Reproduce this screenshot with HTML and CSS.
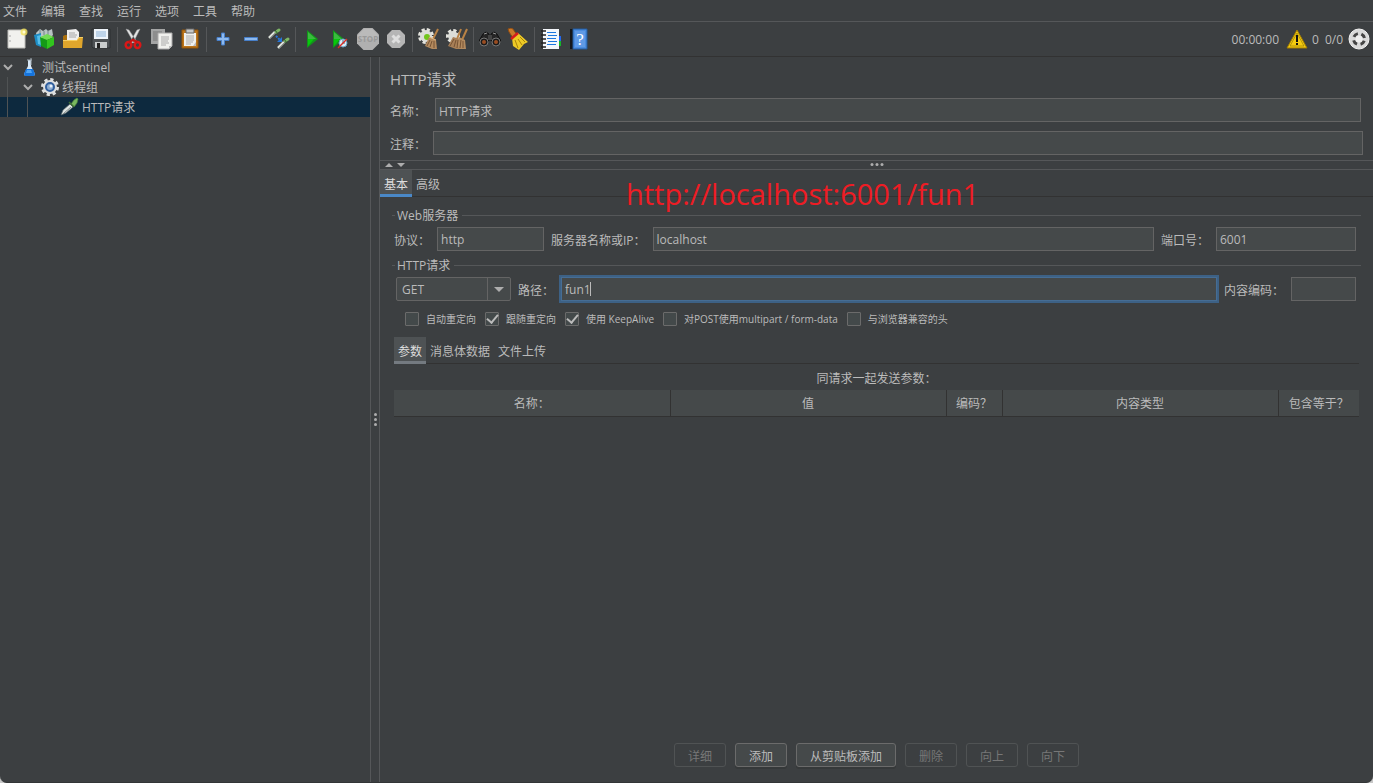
FILE: index.html
```
<!DOCTYPE html>
<html lang="zh-CN">
<head>
    <meta charset="UTF-8">
    <meta name="viewport" content="width=device-width, initial-scale=1.0">
    <title>HTTP请求</title>
    <link rel="stylesheet" href="styles.css">
</head>
<body>
<div class="app">
    <!-- Menu bar -->
    <nav class="menubar">
        <a href="#">文件</a>
        <a href="#">编辑</a>
        <a href="#">查找</a>
        <a href="#">运行</a>
        <a href="#">选项</a>
        <a href="#">工具</a>
        <a href="#">帮助</a>
    </nav>

    <!-- Toolbar -->
    <div class="toolbar">
        <button class="tool" aria-label="新建">
            <svg width="22" height="22" viewBox="0 0 22 22"><path d="M2 2h17v18H2z" fill="#f1f1ee" stroke="#bdbdb9"/><path d="M4 7v2M4 12v2" stroke="#aaa"/><circle cx="18" cy="4" r="3.500" fill="#f4e35c" opacity=".8"/><circle cx="18" cy="4" r="1.500" fill="#fffbd0"/></svg>
        </button>
        <button class="tool" aria-label="模板">
            <svg width="22" height="22" viewBox="0 0 22 22"><path d="M2 5l4-4 3 2 3-2 2 2 4-2 1 6-4 4H3z" fill="#b9c3c4"/><path d="M6 2v5M10 3v4M14 2v5" stroke="#71868a"/><path d="M0 7l7-2v14l-5-2z" fill="#1d8cc4"/><path d="M3 8l4-1v10l-3-1z" fill="#55bde8"/><path d="M6 9l7 2v10l-6-3z" fill="#159a17"/><path d="M6 9l7-3 7 3-7 3z" fill="#73dc55"/><path d="M13 12l7-3v8l-7 4z" fill="#32c51e"/></svg>
        </button>
        <button class="tool" aria-label="打开">
            <svg width="22" height="22" viewBox="0 0 22 22"><path d="M1 8l2-1h4l1 2h10v11H1z" fill="#a86e0d"/><path d="M5 2l9-1 3 3v9H5z" fill="#eee"/><path d="M7 5h6M7 7h8M7 9h7" stroke="#a6a6a6"/><path d="M1 12h14l2-3h4l-1 11H1z" fill="#e0a62c"/><path d="M1 12.500h14l2-3h4" stroke="#f7cf62" fill="none"/></svg>
        </button>
        <button class="tool" aria-label="保存">
            <svg width="22" height="22" viewBox="0 0 22 22"><path d="M2 1h18v19H3l-1-1z" fill="#4d5154" stroke="#2d3032"/><path d="M4 1h14v10H4z" fill="#eef4fa"/><path d="M6 4h10M6 6h10M6 8h10" stroke="#8db3d8"/><path d="M5 14h12v6H5z" fill="#c9cccd"/><path d="M7 15h3v5H7z" fill="#222"/></svg>
        </button>
        <span class="sep"></span>
        <button class="tool" aria-label="剪切">
            <svg width="22" height="22" viewBox="0 0 22 22"><path d="M3 1l3 1 8 12-3 1zM17 1l-3 1-7 12 3 1z" fill="#e4e5e5" stroke="#999b9c" stroke-width=".5"/><ellipse cx="5.500" cy="17" rx="2.800" ry="3" fill="none" stroke="#d91717" stroke-width="2.500"/><ellipse cx="14.500" cy="17" rx="2.800" ry="3" fill="none" stroke="#d91717" stroke-width="2.500"/><path d="M6 14l4-2 4 2" stroke="#c51313" stroke-width="2.500" fill="none"/></svg>
        </button>
        <button class="tool" aria-label="复制">
            <svg width="24" height="22" viewBox="0 0 24 22"><path d="M1 1h14v15H1z" fill="#a4a5a5"/><path d="M3 4h9M3 6h5M3 8h5M3 10h5M3 12h5" stroke="#777"/><path d="M8 5h14v13l-3 3H8z" fill="#f0f0ed" stroke="#aaa"/><path d="M11 9h8M11 11h8M11 13h7M11 15h8M11 17h5" stroke="#aaa"/><path d="M19 21v-3h3z" fill="#bbb"/></svg>
        </button>
        <button class="tool" aria-label="粘贴">
            <svg width="22" height="22" viewBox="0 0 22 22"><path d="M3 2h16v18H3z" fill="#bd761b" stroke="#935508"/><path d="M5 5h12v13H5z" fill="#f0f0ed"/><path d="M7 1h8v4H7z" fill="#c6c8c8" stroke="#666"/><path d="M7 8h8M7 10h8M7 12h8M7 14h7M7 16h5" stroke="#aaa"/><path d="M14 18l3-4v4z" fill="#bbb"/></svg>
        </button>
        <span class="sep"></span>
        <button class="tool" aria-label="全部展开">
            <svg width="22" height="22" viewBox="0 0 22 22"><path d="M9.500 5h3v4.500H17v3h-4.500V17h-3v-4.500H5v-3h4.500z" fill="#8db9ee" stroke="#477fc9"/></svg>
        </button>
        <button class="tool" aria-label="全部折叠">
            <svg width="22" height="22" viewBox="0 0 22 22"><path d="M4.500 9.500h13v3h-13z" fill="#8db9ee" stroke="#477fc9"/></svg>
        </button>
        <button class="tool" aria-label="切换">
            <svg width="22" height="22" viewBox="0 0 22 22"><path d="M1 10l6-6M10 20l6-6" stroke="#dfe3dc" stroke-width="2.500"/><path d="M1 11l7-7M10 21l7-7" stroke="#6c756d" stroke-width=".7"/><path d="M8 4l3-2M17 13l3-2" stroke="#7cb565" stroke-width="3" stroke-linecap="round"/><path d="M7 2l3 4M16 11l3 4" stroke="#2f5b2d"/><path d="M8 8l4 4" stroke="#2776db" stroke-width="2" stroke-dasharray="2 1"/><path d="M14 9v5H9z" fill="#2776db"/></svg>
        </button>
        <span class="sep"></span>
        <button class="tool" aria-label="启动">
            <svg width="22" height="22" viewBox="0 0 22 22"><path d="M6 2l11 9-11 9z" fill="#12961a"/><path d="M7 4l8 7H7z" fill="#3bbb3f"/><path d="M7 11h6l-6 7z" fill="#07c90b"/></svg>
        </button>
        <button class="tool" aria-label="不停顿开始">
            <svg width="22" height="22" viewBox="0 0 22 22"><path d="M4 2l11 9-11 9z" fill="#12961a"/><path d="M5 4l8 7H5z" fill="#3bbb3f"/><path d="M5 11h6l-6 7z" fill="#07c90b"/><circle cx="14" cy="15" r="4" fill="#d9edf8" stroke="#6aa2c6"/><path d="M14 12v3h2" stroke="#4d718c" fill="none"/><path d="M9 20l9-9" stroke="#d92c25" stroke-width="1.500"/></svg>
        </button>
        <button class="tool" aria-label="停止" disabled>
            <svg width="22" height="22" viewBox="0 0 22 22"><path d="M6.500 0h9L22 6.500v9L15.500 22h-9L0 15.500v-9z" fill="#b0b0b0"/><path d="M1 11V7l6-6h8l6 6v4z" fill="#bababa"/><text x="11" y="14" text-anchor="middle" class="stop-text">STOP</text></svg>
        </button>
        <button class="tool" aria-label="关闭" disabled>
            <svg width="22" height="22" viewBox="0 0 22 22"><path d="M7 2h8l5 5v8l-5 5H7l-5-5V7z" fill="#b5b5b5"/><path d="M7.500 7.500l7 7M14.500 7.500l-7 7" stroke="#dedede" stroke-width="3"/></svg>
        </button>
        <span class="sep"></span>
        <button class="tool" aria-label="清除">
            <svg width="22" height="22" viewBox="0 0 22 22"><circle cx="8" cy="8" r="6.500" fill="none" stroke="#e5e5df" stroke-width="3" stroke-dasharray="3.100 2"/><circle cx="8" cy="8" r="6" fill="#dcddd8"/><circle cx="9" cy="9" r="3" fill="#72c61c"/><path d="M20 1l-5 10" stroke="#b98245" stroke-width="2"/><path d="M11 9l7 3 1 9-5 0-7-3z" fill="#b38a5e"/><path d="M12 12l-3 6M14 13l-2 6M16 13v7" stroke="#775334"/><path d="M11 9l7 3" stroke="#e0b783"/></svg>
        </button>
        <button class="tool" aria-label="清除全部">
            <svg width="22" height="22" viewBox="0 0 22 22"><circle cx="7" cy="8" r="5.500" fill="none" stroke="#e5e5df" stroke-width="3" stroke-dasharray="3.100 2"/><circle cx="7" cy="8" r="5" fill="#dcddd8"/><path d="M15 1l-4 10M21 1l-5 11" stroke="#b98245" stroke-width="2"/><path d="M7 9l7 2 1 10-5 0-8-3z" fill="#a98057"/><path d="M13 9l6 3 1 9-5 0-5-2z" fill="#b38a5e"/><path d="M8 11l-4 7M10 12l-2 7M12 12l-1 8M15 12l-1 8M17 13v7" stroke="#775334"/></svg>
        </button>
        <span class="sep"></span>
        <button class="tool" aria-label="查找">
            <svg width="22" height="22" viewBox="0 0 22 22"><path d="M4 6l3-2 3 2v7H0zM18 6l-3-2-3 2v7h10z" fill="#252525" stroke="#111"/><path d="M9 7h4v5H9z" fill="#444"/><circle cx="5" cy="14" r="4" fill="#1b1b1b" stroke="#777"/><circle cx="17" cy="14" r="4" fill="#1b1b1b" stroke="#777"/><circle cx="5" cy="14" r="2" fill="#9b4d22"/><circle cx="17" cy="14" r="2" fill="#9b4d22"/><path d="M5 6l3-1M14 5l3 1" stroke="#999"/></svg>
        </button>
        <button class="tool" aria-label="重置查找">
            <svg width="22" height="22" viewBox="0 0 22 22"><path d="M1 1l3-1 2 1 4 6-4 3-4-6z" fill="#c9792a" stroke="#8d4c13"/><path d="M5 10l6-5 10 9-4 2-5 6-6-4z" fill="#edca25"/><path d="M8 12l3 8M11 11l4 6M13 9l5 5" stroke="#a9830b"/><path d="M4 11l7-6" stroke="#d51c1c" stroke-width="2.500"/></svg>
        </button>
        <span class="sep"></span>
        <button class="tool" aria-label="函数助手">
            <svg width="22" height="22" viewBox="0 0 22 22"><path d="M3 1h16v20H3z" fill="#f4f7fb"/><path d="M7 4.500h9M8 7.500h9M7 10.500h9M8 13.500h9M7 16.500h9" stroke="#1c77df"/><path d="M1 3h5M1 7h5M1 11h5M1 15h5M1 19h5" stroke="#222" stroke-width="1.500"/><path d="M19 8h2v5h-2z" fill="#2268ee"/><path d="M19 13h2v5h-2z" fill="#15b52b"/></svg>
        </button>
        <button class="tool" aria-label="帮助">
            <svg width="22" height="22" viewBox="0 0 22 22"><path d="M2 1h4v20H2z" fill="#151719"/><path d="M5 1h14v20H5z" fill="#4a8cdf" stroke="#235b9d"/><path d="M7 3h10v16H7z" fill="#5f9ae6"/><text x="12" y="17" text-anchor="middle" class="help-text">?</text></svg>
        </button>
        <div class="status">
            <span class="timer">00:00:00</span>
            <svg width="22" height="20" viewBox="0 0 22 20"><path d="M11 1l10 18H1z" fill="#f5cb10" stroke="#a27c00" stroke-linejoin="round"/><path d="M11 4l7 13H4z" fill="none" stroke="#8a7206" stroke-width=".6"/><path d="M11 6v7M11 14v2" stroke="#111" stroke-width="2"/></svg>
            <span class="errors">0</span>
            <span class="threads">0/0</span>
            <svg width="22" height="22" viewBox="0 0 22 22"><circle cx="11" cy="11" r="10" fill="#d9d9d9" stroke="#f1f1f1"/><circle cx="11" cy="11" r="5.500" fill="none" stroke="#444" stroke-width="3" stroke-dasharray="5 3.640" stroke-dashoffset="-1.800"/><circle cx="11" cy="11" r="3.500" fill="#eee"/></svg>
        </div>
    </div>

    <div class="main">
        <!-- Test plan tree -->
        <aside class="tree">
            <div class="row">
                <svg class="arrow" width="10" height="10" viewBox="0 0 10 10"><path d="M1 3l4 4 4-4" fill="none" stroke="#adadad" stroke-width="2"/></svg>
                <svg width="20" height="20" viewBox="0 0 20 20"><path d="M8 3h3v6l4 8-1 2H5l-1-2 4-8z" fill="#d9e8f6"/><path d="M6 12h7l2 5-1 2H5l-1-2z" fill="#1674dc"/><path d="M7 13h4l1 3H6z" fill="#4ea5f5"/><path d="M7 3h5M11 1v7" stroke="#a8b3bb"/></svg>
                <span>测试sentinel</span>
            </div>
            <div class="row level-1">
                <i class="guide"></i>
                <svg class="arrow" width="10" height="10" viewBox="0 0 10 10"><path d="M1 3l4 4 4-4" fill="none" stroke="#adadad" stroke-width="2"/></svg>
                <svg width="20" height="20" viewBox="0 0 20 20"><circle cx="10" cy="10" r="7.500" fill="none" stroke="#dedfdf" stroke-width="3" stroke-dasharray="3.200 2.690"/><circle cx="10" cy="10" r="7" fill="#dedfdf"/><circle cx="10" cy="10" r="4" fill="#8fadd0" stroke="#315f9d" stroke-width="2"/><circle cx="11" cy="9" r="1.500" fill="#e8f1fb"/></svg>
                <span>线程组</span>
            </div>
            <div class="row level-2 selected">
                <i class="guide"></i>
                <i class="guide"></i>
                <svg width="20" height="20" viewBox="0 0 20 20"><path d="M1 18l2-5 7-6 3 3-7 6z" fill="#dfe5e3" stroke="#526064" stroke-width=".7"/><path d="M3 17l8-7" stroke="#7f898a"/><path d="M11 7l3-4 3-2 1 1-1 4-3 4z" fill="#79b85f" stroke="#4b8139" stroke-width=".7"/><path d="M9 5l5 5" stroke="#3e6e35" stroke-width="1.500"/></svg>
                <span>HTTP请求</span>
            </div>
        </aside>

        <div class="divider"><i></i><i></i><i></i></div>

        <!-- HTTP request editor -->
        <main class="editor">
            <h1>HTTP请求</h1>
            <div class="line name-line">
                <label for="name">名称：</label>
                <input type="text" id="name" class="grow" value="HTTP请求">
            </div>
            <div class="line comment-line">
                <label for="comment">注释：</label>
                <input type="text" id="comment" class="grow">
            </div>

            <div class="h-divider">
                <button class="collapse up" aria-label="向上折叠"></button>
                <button class="collapse down" aria-label="向下折叠"></button>
                <div class="dots"><i></i><i></i><i></i></div>
            </div>

            <div class="tabs main-tabs">
                <button class="tab active">基本</button>
                <button class="tab">高级</button>
                <span class="note">http://localhost:6001/fun1</span>
            </div>

            <div class="content">
                <fieldset class="group">
                    <legend>Web服务器</legend>
                    <div class="fields">
                        <label for="protocol">协议：</label>
                        <input type="text" id="protocol" class="protocol" value="http">
                        <label for="server">服务器名称或IP：</label>
                        <input type="text" id="server" class="grow" value="localhost">
                        <label for="port">端口号：</label>
                        <input type="text" id="port" class="port" value="6001">
                    </div>
                </fieldset>

                <fieldset class="group">
                    <legend>HTTP请求</legend>
                    <div class="fields request">
                        <div class="combo">
                            <select aria-label="方法">
                                <option>GET</option>
                            </select>
                        </div>
                        <label for="path">路径：</label>
                        <div class="path grow">
                            <input type="text" id="path" value="fun1">
                            <i class="caret"></i>
                        </div>
                        <label for="encoding">内容编码：</label>
                        <input type="text" id="encoding" class="encoding">
                    </div>
                </fieldset>

                <div class="checks">
                    <label><input type="checkbox">自动重定向</label>
                    <label><input type="checkbox" checked>跟随重定向</label>
                    <label><input type="checkbox" checked>使用 KeepAlive</label>
                    <label><input type="checkbox">对POST使用multipart / form-data</label>
                    <label><input type="checkbox">与浏览器兼容的头</label>
                </div>

                <div class="params">
                    <div class="tabs sub-tabs">
                        <button class="tab active">参数</button>
                        <button class="tab">消息体数据</button>
                        <button class="tab">文件上传</button>
                    </div>
                    <table>
                        <caption>同请求一起发送参数：</caption>
                        <thead>
                            <tr>
                                <th>名称：</th>
                                <th>值</th>
                                <th class="col-encode">编码？</th>
                                <th>内容类型</th>
                                <th class="col-equals">包含等于？</th>
                            </tr>
                        </thead>
                    </table>
                </div>
            </div>

            <div class="actions">
                <button disabled>详细</button>
                <button>添加</button>
                <button>从剪贴板添加</button>
                <button disabled>删除</button>
                <button disabled>向上</button>
                <button disabled>向下</button>
            </div>
        </main>
    </div>
</div>
</body>
</html>
```
FILE: styles.css
```
/* General Reset */
* {
    margin: 0;
    padding: 0;
    box-sizing: border-box;
}

body {
    font-family: "Open Sans", "Noto Sans CJK SC", sans-serif;
    font-size: 12px;
    line-height: 16px;
    background: #c8c8c8;
    color: #bbbbbb;
    overflow: hidden;
}

button,
input,
select {
    font: inherit;
    color: inherit;
}

.app {
    display: flex;
    flex-direction: column;
    height: 100vh;
    background: #3c3f41;
    border-bottom: 1px solid #323536;
    border-radius: 0 0 7px 7px;
}

/* Menu bar */
.menubar {
    display: flex;
    gap: 14px;
    padding: 4px 3px 1px;
    border-bottom: 1px solid #555759;
}

.menubar a {
    color: inherit;
    text-decoration: none;
}

/* Toolbar */
.toolbar {
    display: flex;
    align-items: center;
    height: 35px;
    padding: 0 3px;
    border-bottom: 1px solid #323232;
}

.tool {
    display: flex;
    align-items: center;
    justify-content: center;
    width: 28px;
    height: 28px;
    background: none;
    border: none;
}

.sep {
    width: 5px;
    height: 25px;
    background: linear-gradient(#555759, #555759) center / 1px 100% no-repeat;
}

.stop-text {
    font-size: 8px;
    font-weight: bold;
    fill: #999999;
}

.help-text {
    font-family: "Liberation Serif", serif;
    font-size: 17px;
    fill: #ffffff;
}

.status {
    display: flex;
    align-items: center;
    margin-left: auto;
}

.status span {
    padding-top: 2px;
}

.timer {
    margin-right: 7px;
}

.errors {
    margin: 0 6px 0 4px;
}

.threads {
    margin-right: 5px;
}

/* Main area */
.main {
    display: flex;
    flex: 1;
    min-height: 0;
}

.tree {
    flex: 0 0 370px;
}

.row {
    display: flex;
    align-items: center;
    height: 20px;
    padding-left: 3px;
}

.row span {
    margin-left: 2px;
    padding-top: 2px;
}

.arrow {
    margin-right: 7px;
}

.guide {
    width: 20px;
    height: 20px;
    border-left: 1px solid #505354;
}

.level-1,
.level-2 {
    padding-left: 7px;
}

.level-1 .guide {
    width: 16px;
}

.level-2 svg {
    margin-left: 13px;
}

.selected {
    background: #0d293e;
}

/* Vertical splitter */
.divider {
    display: flex;
    flex-direction: column;
    align-items: center;
    justify-content: center;
    gap: 2px;
    width: 10px;
    border: 1px solid #555759;
    border-width: 0 1px;
}

.divider i,
.dots i {
    width: 3px;
    height: 3px;
    border-radius: 50%;
    background: #adadad;
}

/* Editor */
.editor {
    display: flex;
    flex: 1;
    flex-direction: column;
    min-width: 0;
}

h1 {
    padding: 12px 10px 9px;
    font-size: 15px;
    font-weight: normal;
    line-height: 20px;
}

.line {
    display: flex;
    align-items: center;
}

.line label,
.fields label {
    padding-top: 3px;
}

.name-line {
    gap: 9px;
    padding: 0 12px 9px 10px;
}

.comment-line {
    gap: 7px;
    padding: 0 10px 5px;
}

input[type="text"] {
    height: 24px;
    min-width: 0;
    padding: 1px 3px 0;
    background: #45494a;
    border: 1px solid #646464;
    outline: none;
}

.grow {
    flex: 1;
    min-width: 0;
}

/* Horizontal splitter */
.h-divider {
    position: relative;
    display: flex;
    align-items: center;
    gap: 4px;
    height: 10px;
    padding-left: 5px;
    border: 1px solid #555759;
    border-width: 1px 0;
}

.collapse {
    border: 4px solid transparent;
    background: none;
}

.up {
    border-top: none;
    border-bottom-color: #adadad;
}

.down {
    border-bottom: none;
    border-top-color: #adadad;
}

.dots {
    position: absolute;
    top: 2px;
    left: 50%;
    display: flex;
    gap: 2px;
    transform: translateX(-50%);
}

/* Tabs */
.tabs {
    position: relative;
    display: flex;
    height: 27px;
    box-shadow: inset 0 -1px #323232;
}

.tab {
    padding: 5px 4px 0;
    background: none;
    border: none;
    border-bottom: 3px solid transparent;
}

.tab.active {
    background: #4e5254;
    color: #dddddd;
    border-bottom-color: #4a88c7;
}

.sub-tabs .tab.active {
    border-bottom-color: #747a80;
}

/* Red note on top of the form */
.note {
    position: absolute;
    top: 4px;
    left: 246px;
    color: #ee1c24;
    font-size: 29px;
    line-height: 40px;
    white-space: nowrap;
}

.content {
    flex: 1;
    padding: 9px 12px 0;
}

.group {
    min-width: 0;
    padding: 0 5px 0 2px;
    border: none;
    border-top: 1px solid #555759;
}

.group legend {
    margin-left: 1px;
    padding: 2px 4px 0 2px;
}

.fields {
    display: flex;
    align-items: center;
    gap: 7px;
    padding: 3px 0 5px;
}

.request {
    padding-left: 2px;
}

.protocol {
    width: 107px;
}

.port {
    width: 140px;
}

.encoding {
    width: 65px;
}

.combo {
    position: relative;
    width: 115px;
}

.combo select {
    display: block;
    width: 100%;
    height: 24px;
    padding: 1px 0 0 5px;
    appearance: none;
    background: linear-gradient(#646464, #646464) right 22px top / 1px 100% no-repeat #45494a;
    border: 1px solid #646464;
    border-radius: 2px;
    outline: none;
}

.combo::after {
    content: "";
    position: absolute;
    top: 10px;
    right: 7px;
    border: 5px solid transparent;
    border-top-color: #adadad;
    border-bottom: none;
    pointer-events: none;
}

.path {
    position: relative;
    display: flex;
}

.path input[type="text"] {
    width: 100%;
    border-color: #466d94;
    box-shadow: 0 0 0 2px #3d6185;
}

.caret {
    position: absolute;
    top: 5px;
    left: 29px;
    width: 1px;
    height: 14px;
    background: #bbbbbb;
}

/* Checkboxes */
.checks {
    display: flex;
    gap: 9px;
    padding: 6px 13px 11px;
    font-size: 10px;
    line-height: 14px;
}

.checks label {
    display: flex;
    align-items: center;
    gap: 7px;
}

.checks input {
    display: flex;
    align-items: center;
    justify-content: center;
    width: 14px;
    height: 14px;
    appearance: none;
    background: #43494a;
    border: 1px solid #6b6b6b;
    border-radius: 1px;
}

.checks input:checked::after {
    content: "";
    width: 5px;
    height: 9px;
    margin-bottom: 3px;
    border: solid #bbbbbb;
    border-width: 0 2px 2px 0;
    transform: rotate(40deg);
}

/* Parameters table */
.params {
    padding: 0 2px;
}

table {
    width: 100%;
    table-layout: fixed;
    border-collapse: collapse;
}

caption {
    padding: 7px 0 3px;
}

th {
    height: 26px;
    padding-top: 3px;
    background: #45494a;
    border-left: 1px solid #323232;
    border-bottom: 1px solid #323232;
    font-weight: normal;
}

th:first-child {
    border-left: none;
}

.col-encode {
    width: 56px;
}

.col-equals {
    width: 81px;
}

/* Bottom buttons */
.actions {
    display: flex;
    justify-content: center;
    gap: 9px;
    padding-bottom: 15px;
}

.actions button {
    height: 24px;
    padding: 3px 13px 0;
    background: #45494a;
    border: 1px solid #6b6b6b;
    border-radius: 3px;
    box-shadow: 0 2px #36393a;
}

.actions button:disabled {
    background: none;
    border-color: #505354;
    box-shadow: none;
    color: #777777;
}
```
